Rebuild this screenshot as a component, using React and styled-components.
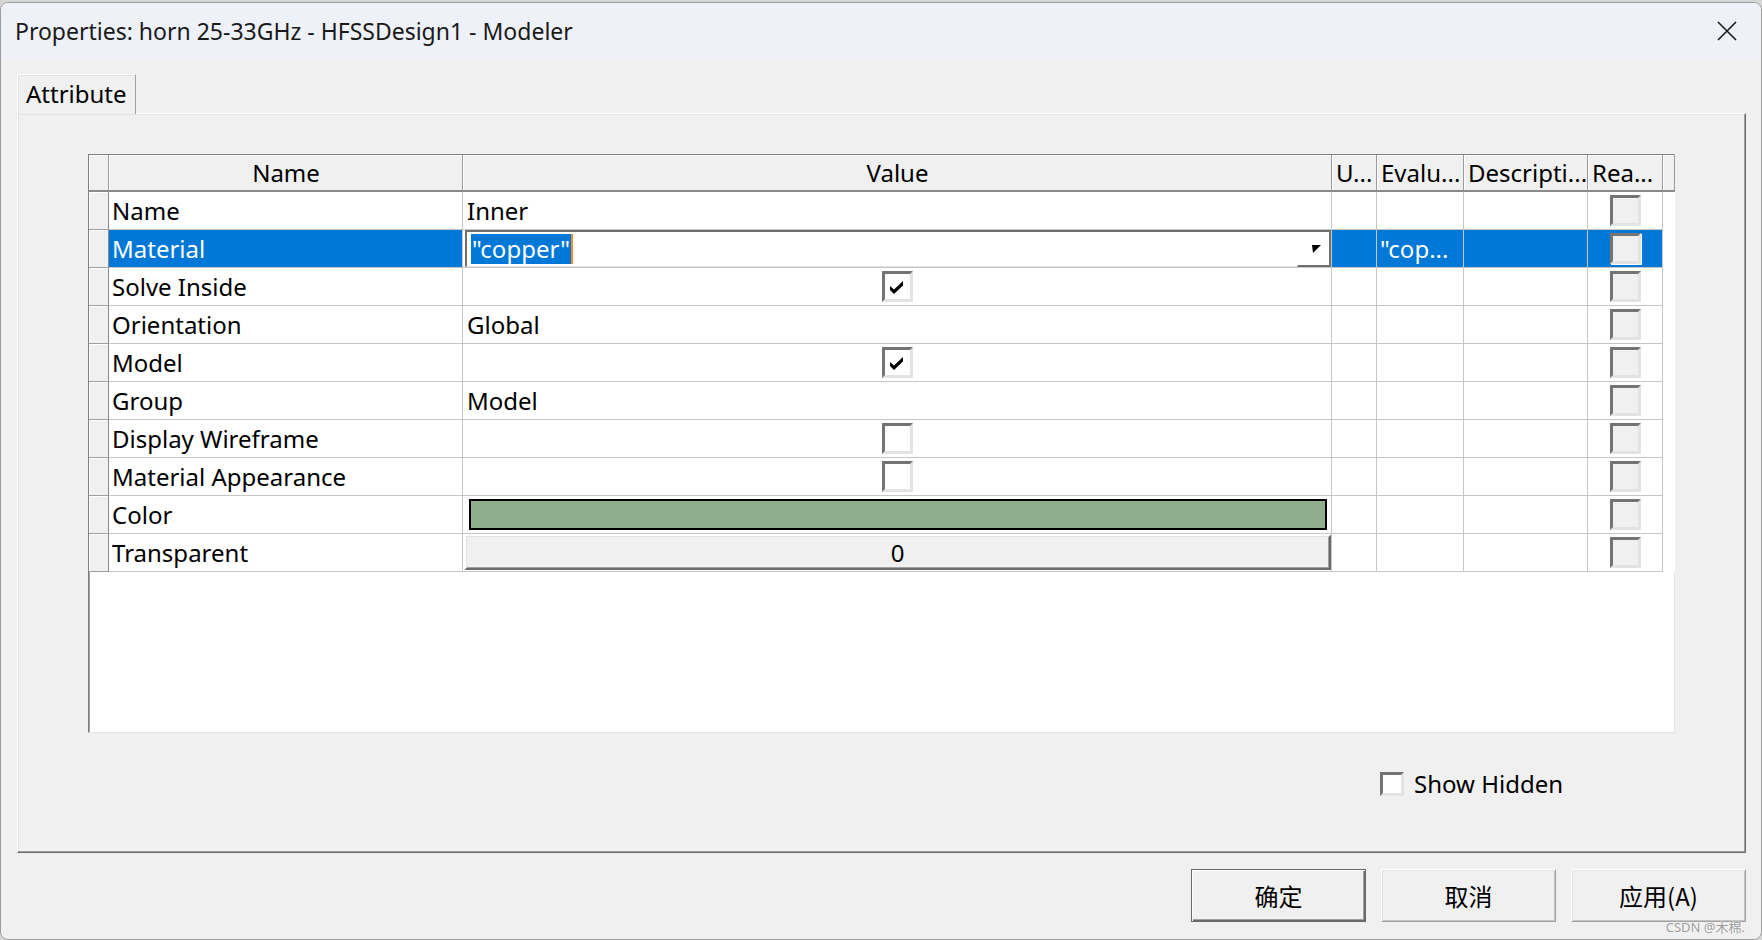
import React from "react";
import styled, { createGlobalStyle } from "styled-components";

const GlobalStyle = createGlobalStyle`
  html, body {
    margin: 0;
    padding: 0;
    background: #d6d6d6;
  }
  body {
    font-family: "Noto Sans", "Noto Sans CJK SC", sans-serif;
    color: #000;
  }
`;

const headers = [
  { label: "", align: "left" },
  { label: "Name", align: "center" },
  { label: "Value", align: "center" },
  { label: "U...", align: "left" },
  { label: "Evalu...", align: "left" },
  { label: "Descripti...", align: "left" },
  { label: "Rea...", align: "left" },
  { label: "", align: "left" },
];

const rows = [
  { name: "Name", value: { type: "text", text: "Inner" } },
  { name: "Material", value: { type: "combo", text: '"copper"' }, evaluated: '"cop...', selected: true },
  { name: "Solve Inside", value: { type: "check", checked: true } },
  { name: "Orientation", value: { type: "text", text: "Global" } },
  { name: "Model", value: { type: "check", checked: true } },
  { name: "Group", value: { type: "text", text: "Model" } },
  { name: "Display Wireframe", value: { type: "check" } },
  { name: "Material Appearance", value: { type: "check" } },
  { name: "Color", value: { type: "color", color: "#8fae8c" } },
  { name: "Transparent", value: { type: "button", text: "0" } },
];

const CheckMark = () => (
  <svg width="16" height="16" viewBox="0 0 16 16">
    <polygon points="1,7 5,10.5 14,2 14,6.5 5,15 1,11" fill="#000" />
  </svg>
);

const CheckBox = ({ checked, disabled, selected, size = 31 }) => (
  <Box $size={size} $disabled={disabled} $selected={selected}>
    {checked && <CheckMark />}
  </Box>
);

const ValueCell = ({ row }) => {
  const v = row.value;
  if (v.type === "combo") {
    return (
      <Cell $pad="0">
        <Combo>
          <ComboText>
            <Highlight>{v.text}</Highlight>
            <Caret />
          </ComboText>
          <ComboButton>
            <svg width="9" height="8" viewBox="0 0 9 8">
              <polygon points="0,0 9,0 1,8" fill="#000" />
            </svg>
          </ComboButton>
        </Combo>
      </Cell>
    );
  }
  if (v.type === "check") {
    return (
      <Cell $center>
        <CheckBox checked={v.checked} />
      </Cell>
    );
  }
  if (v.type === "color") {
    return (
      <Cell $pad="3px 4px 3px 6px">
        <Swatch $color={v.color} />
      </Cell>
    );
  }
  if (v.type === "button") {
    return (
      <Cell $pad="1px 0 1px 2px">
        <CellButton>{v.text}</CellButton>
      </Cell>
    );
  }
  return <Cell $pad="0 4px">{v.text}</Cell>;
};

export default function App() {
  return (
    <>
      <GlobalStyle />
      <Window>
        <TitleBar>
          <span>Properties: horn 25-33GHz - HFSSDesign1 - Modeler</span>
          <svg width="20" height="20" viewBox="0 0 20 20">
            <path d="M1 1 L19 19 M19 1 L1 19" stroke="#1a1a1a" strokeWidth="1.6" />
          </svg>
        </TitleBar>
        <Body>
          <TabStrip>
            <Tab>Attribute</Tab>
          </TabStrip>
          <Panel>
            <GridBox>
              <Table>
                {headers.map((h, i) => (
                  <HeaderCell key={"h" + i} $align={h.align}>
                    {h.label}
                  </HeaderCell>
                ))}
                {rows.map((row) => (
                  <React.Fragment key={row.name}>
                    <Indicator />
                    <Cell $selected={row.selected} $pad="0 3px">
                      {row.name}
                    </Cell>
                    <ValueCell row={row} />
                    <Cell $selected={row.selected} />
                    <Cell $selected={row.selected} $pad="0 3px">
                      {row.evaluated || ""}
                    </Cell>
                    <Cell $selected={row.selected} />
                    <Cell $selected={row.selected} $center>
                      <CheckBox disabled selected={row.selected} />
                    </Cell>
                    <Filler />
                  </React.Fragment>
                ))}
              </Table>
            </GridBox>
            <ShowHiddenRow>
              <CheckBox size={24} />
              <span>Show Hidden</span>
            </ShowHiddenRow>
          </Panel>
          <Footer>
            <DialogButton $default>确定</DialogButton>
            <DialogButton>取消</DialogButton>
            <DialogButton>应用(A)</DialogButton>
          </Footer>
        </Body>
        <Watermark>CSDN @木棉.</Watermark>
      </Window>
    </>
  );
}

const Window = styled.div`
  position: relative;
  box-sizing: border-box;
  margin-top: 2px;
  width: 1762px;
  height: 938px;
  background: #f0f0f0;
  border: 1px solid #9d9d9d;
  border-radius: 8px;
  overflow: hidden;
  display: flex;
  flex-direction: column;
`;

const TitleBar = styled.div`
  height: 55px;
  flex: none;
  background: #eff1f8;
  display: flex;
  align-items: center;
  justify-content: space-between;
  padding: 0 24px 0 14px;
  font-size: 23px;
  color: #1a1a1a;
`;

const Body = styled.div`
  flex: 1;
  display: flex;
  flex-direction: column;
  padding: 16px 15px 0 16px;
`;

const TabStrip = styled.div`
  display: flex;
  height: 39px;
`;

const Tab = styled.div`
  box-sizing: border-box;
  width: 119px;
  height: 40px;
  padding: 2px 0 0 8px;
  font-size: 24px;
  background: #f0f0f0;
  border-top: 1px solid #fff;
  border-left: 1px solid #fff;
  border-right: 1px solid #a0a0a0;
  box-shadow: inset 1px 1px 0 #e3e3e3;
  position: relative;
  z-index: 1;
`;

const Panel = styled.div`
  box-sizing: border-box;
  height: 740px;
  border-top: 1px solid #fff;
  border-left: 1px solid #fff;
  border-right: 1px solid #696969;
  border-bottom: 1px solid #696969;
  box-shadow: inset -1px -1px 0 #a0a0a0, inset 1px 1px 0 #e3e3e3;
  padding: 40px 0 0 70px;
  display: flex;
  flex-direction: column;
`;

const GridBox = styled.div`
  box-sizing: border-box;
  width: 1587px;
  height: 579px;
  background: #fff;
  border-top: 1px solid #808080;
  border-left: 1px solid #808080;
  border-right: 1px solid #e3e3e3;
  border-bottom: 1px solid #e3e3e3;
  box-shadow: inset 1px 1px 0 #a0a0a0;
`;

const Table = styled.div`
  display: grid;
  grid-template-columns: 20px 354px 869px 45px 87px 124px 75px 12px;
  grid-template-rows: 37px repeat(10, 38px);
`;

const HeaderCell = styled.div`
  box-sizing: border-box;
  background: #f0f0f0;
  border-right: 1px solid #9a9a9a;
  border-bottom: 2px solid #8a8a8a;
  box-shadow: inset 1px 1px 0 #fff;
  font-size: 24px;
  display: flex;
  align-items: center;
  justify-content: ${(p) => (p.$align === "center" ? "center" : "flex-start")};
  padding: 0 3px 0 4px;
  white-space: nowrap;
  overflow: hidden;
`;

const Indicator = styled.div`
  box-sizing: border-box;
  background: #f0f0f0;
  border-right: 1px solid #8a8a8a;
  border-bottom: 1px solid #a0a0a0;
  box-shadow: inset 1px 1px 0 #fff;
`;

const Cell = styled.div`
  box-sizing: border-box;
  min-width: 0;
  border-right: 1px solid #c6c6c6;
  border-bottom: 1px solid #c6c6c6;
  background: ${(p) => (p.$selected ? "#0078d7" : "#fff")};
  color: ${(p) => (p.$selected ? "#fff" : "#000")};
  font-size: 24px;
  padding: ${(p) => p.$pad || "0"};
  display: flex;
  align-items: center;
  justify-content: ${(p) => (p.$center ? "center" : "flex-start")};
  white-space: nowrap;
  overflow: hidden;
`;

const Filler = styled.div`
  background: #fff;
`;

const Box = styled.span`
  box-sizing: border-box;
  flex: none;
  width: ${(p) => p.$size}px;
  height: ${(p) => p.$size}px;
  border: 3px solid;
  border-color: #747474 #e3e3e3 #e3e3e3 #747474;
  background: ${(p) => (p.$disabled ? "#f0f0f0" : "#fff")};
  box-shadow: ${(p) => (p.$selected ? "1px 1px 0 #fff" : "none")};
  display: flex;
  align-items: center;
  justify-content: center;
`;

const Combo = styled.div`
  box-sizing: border-box;
  margin: -1px 0 0 2px;
  width: 867px;
  height: 37px;
  background: #fff;
  border-top: 2px solid #707070;
  border-left: 2px solid #707070;
  border-bottom: 1px solid #e3e3e3;
  display: flex;
`;

const ComboText = styled.div`
  flex: 1;
  display: flex;
  align-items: center;
  padding-left: 4px;
`;

const Highlight = styled.span`
  background: #0078d7;
  color: #fff;
  height: 30px;
  display: inline-flex;
  align-items: center;
  padding: 0 1px;
`;

const Caret = styled.span`
  width: 2px;
  height: 30px;
  background: #ff8728;
`;

const ComboButton = styled.div`
  box-sizing: border-box;
  width: 34px;
  margin-bottom: -1px;
  border-right: 2px solid #707070;
  border-bottom: 2px solid #707070;
  border-left: 1px solid #fff;
  display: flex;
  align-items: flex-start;
  justify-content: flex-end;
  padding: 13px 8px 0 0;
`;

const Swatch = styled.div`
  box-sizing: border-box;
  flex: 1;
  height: 31px;
  background: ${(p) => p.$color};
  border: 2px solid #000;
`;

const CellButton = styled.div`
  box-sizing: border-box;
  flex: 1;
  height: 35px;
  background: #f0f0f0;
  border-top: 1px solid #fff;
  border-left: 1px solid #fff;
  border-right: 2px solid #696969;
  border-bottom: 2px solid #696969;
  box-shadow: inset 1px 1px 0 #e3e3e3, inset -1px -1px 0 #a0a0a0;
  display: flex;
  align-items: center;
  justify-content: center;
  font-size: 24px;
  color: #000;
`;

const ShowHiddenRow = styled.div`
  display: flex;
  align-items: center;
  gap: 10px;
  margin-top: 34px;
  padding-left: 1292px;
  font-size: 24px;
`;

const Footer = styled.div`
  display: flex;
  justify-content: flex-end;
  gap: 15px;
  margin-top: 16px;
`;

const DialogButton = styled.button`
  box-sizing: border-box;
  width: 175px;
  height: 53px;
  padding: 0;
  font-family: "Noto Sans CJK SC", "Noto Sans", sans-serif;
  font-size: 24px;
  color: #000;
  background: #f0f0f0;
  border: 1px solid;
  border-color: ${(p) => (p.$default ? "#6a6a6a" : "#fff #a0a0a0 #a0a0a0 #fff")};
  box-shadow: ${(p) =>
    p.$default
      ? "inset 1px 1px 0 #fff, inset -1px -1px 0 #696969, inset -2px -2px 0 #a0a0a0"
      : "inset 1px 1px 0 #e3e3e3, inset -1px -1px 0 #c4c4c4"};
`;

const Watermark = styled.span`
  position: absolute;
  right: 16px;
  bottom: 3px;
  font-family: "Noto Sans", "Noto Sans CJK SC", sans-serif;
  font-size: 13px;
  color: #9a9a9a;
  text-shadow: 0 0 2px #fff, 0 0 1px #fff;
`;
